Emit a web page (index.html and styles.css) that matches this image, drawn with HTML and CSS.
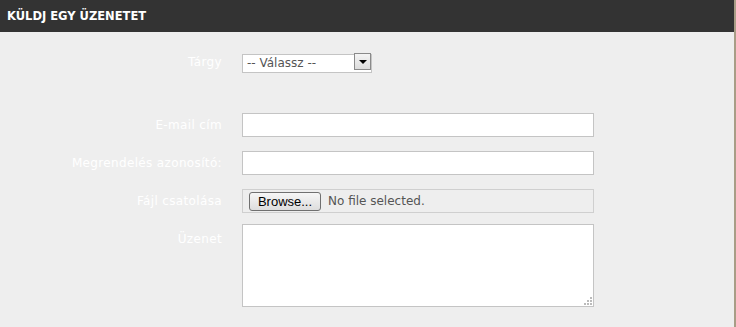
FILE: index.html
```html
<!DOCTYPE html>
<html lang="hu">
<head>
  <meta charset="UTF-8" />
  <title>Küldj egy üzenetet</title>
  <link rel="stylesheet" href="styles.css">
</head>
<body>
  <div class="page">
    <h2 class="box-title">Küldj egy üzenetet</h2>

    <form class="contact-form">
      <div class="row row-subject">
        <label for="subject">Tárgy</label>
        <div class="select-wrap">
          <select id="subject">
            <option selected>-- Válassz --</option>
          </select>
          <span class="select-arrow"></span>
        </div>
      </div>

      <div class="row">
        <label for="email">E-mail cím</label>
        <input type="text" id="email" class="text-input" />
      </div>

      <div class="row">
        <label for="order">Megrendelés azonosító:</label>
        <input type="text" id="order" class="text-input" />
      </div>

      <div class="row row-file">
        <label>Fájl csatolása</label>
        <div class="file-box">
          <button type="button" class="browse-btn">Browse...</button>
          <span class="file-name">No file selected.</span>
        </div>
      </div>

      <div class="row row-message">
        <label for="message">Üzenet</label>
        <div class="textarea-wrap">
          <textarea id="message"></textarea>
          <svg class="grip" width="8" height="8" viewBox="0 0 8 8">
            <rect x="6" y="0" width="2" height="2" fill="#bbb"/>
            <rect x="3" y="3" width="2" height="2" fill="#bbb"/>
            <rect x="6" y="3" width="2" height="2" fill="#bbb"/>
            <rect x="0" y="6" width="2" height="2" fill="#bbb"/>
            <rect x="3" y="6" width="2" height="2" fill="#bbb"/>
            <rect x="6" y="6" width="2" height="2" fill="#bbb"/>
          </svg>
        </div>
      </div>
    </form>
  </div>
</body>
</html>
```

FILE: styles.css
```css
body {
  margin: 0;
  font-family: "DejaVu Sans", Verdana, sans-serif;
  background: #eeeeee;
}
.page {
  width: 734px;
  height: 327px;
  background: #eeeeee;
  border-right: 2px solid #a89d86;
  overflow: hidden;
}
.box-title {
  margin: 0;
  height: 32px;
  line-height: 32px;
  padding-left: 7px;
  background: #333333;
  color: #ffffff;
  font-size: 11.5px;
  font-weight: bold;
  text-transform: uppercase;
}
.contact-form {
  padding-top: 20px;
}
.row {
  display: flex;
  align-items: center;
  margin-bottom: 14px;
}
.row label {
  width: 222px;
  margin-right: 20px;
  text-align: right;
  color: #ffffff;
  font-size: 12px;
  letter-spacing: 0.35px;
}
.row-subject {
  margin-bottom: 42px;
}
.select-wrap {
  position: relative;
  width: 130px;
  height: 19px;
}
.select-wrap select {
  appearance: none;
  -webkit-appearance: none;
  width: 100%;
  height: 19px;
  margin: 0;
  padding: 0 0 0 4px;
  border: 1px solid #c4c4c4;
  background: #ffffff;
  color: #555555;
  font-family: "DejaVu Sans", Verdana, sans-serif;
  font-size: 12px;
  outline: none;
}
.select-arrow {
  position: absolute;
  right: 1px;
  top: 1px;
  width: 15px;
  height: 15px;
  border: 1px solid #8a8a8a;
  background: linear-gradient(#f4f4f4, #dcdcdc);
  pointer-events: none;
}
.select-arrow::after {
  content: "";
  position: absolute;
  left: 4px;
  top: 6px;
  border-left: 4px solid transparent;
  border-right: 4px solid transparent;
  border-top: 4px solid #000000;
}
.text-input {
  width: 352px;
  height: 24px;
  margin: 0;
  padding: 0 4px;
  box-sizing: border-box;
  border: 1px solid #c4c4c4;
  background: #ffffff;
  font-family: "DejaVu Sans", Verdana, sans-serif;
  font-size: 12px;
}
.row-file {
  margin-bottom: 11px;
}
.file-box {
  display: flex;
  align-items: center;
  width: 352px;
  height: 24px;
  box-sizing: border-box;
  border: 1px solid #cfcfcf;
  padding-left: 6px;
}
.browse-btn {
  width: 72px;
  height: 19px;
  margin: 0 7px 0 0;
  padding: 0;
  border: 1px solid #707070;
  border-radius: 3px;
  background: linear-gradient(#f6f6f6, #dddddd);
  color: #000000;
  font-family: "Liberation Sans", Arial, sans-serif;
  font-size: 13px;
}
.file-name {
  color: #555555;
  font-size: 12px;
}
.row-message {
  align-items: flex-start;
}
.row-message label {
  padding-top: 8px;
}
.textarea-wrap {
  position: relative;
  width: 352px;
  height: 83px;
}
.textarea-wrap textarea {
  display: block;
  width: 100%;
  height: 100%;
  margin: 0;
  box-sizing: border-box;
  border: 1px solid #c4c4c4;
  background: #ffffff;
  resize: none;
  outline: none;
}
.grip {
  position: absolute;
  right: 2px;
  bottom: 2px;
}
```
